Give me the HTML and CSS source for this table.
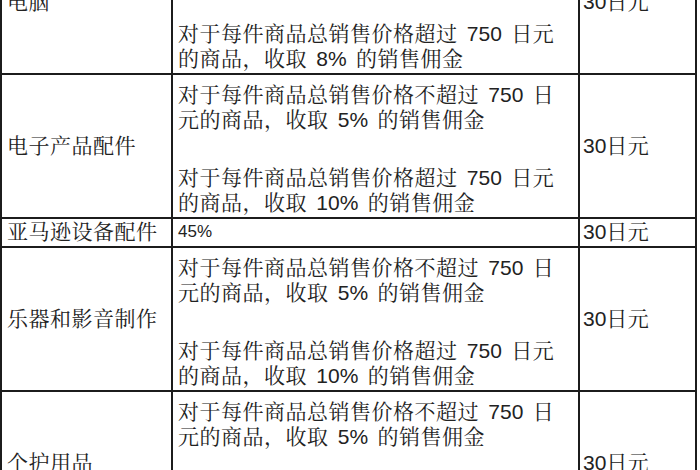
FILE: index.html
```html
<!DOCTYPE html>
<html lang="zh-CN">
<head>
<meta charset="utf-8">
<title>销售佣金</title>
<link rel="stylesheet" href="styles.css">
</head>
<body>
<div class="fee-table">
  <div class="cell cat">电脑</div>
  <div class="cell rule">
    <p class="para">对于每件商品总销售价格不超过 <span class="lat">750</span> 日<br>元的商品，收取 <span class="lat">5%</span> 的销售佣金</p>
    <p class="para">对于每件商品总销售价格超过 <span class="lat">750</span> 日元<br>的商品，收取 <span class="lat">8%</span> 的销售佣金</p>
  </div>
  <div class="cell min"><span class="lat">30</span>日元</div>

  <div class="cell cat">电子产品配件</div>
  <div class="cell rule">
    <p class="para">对于每件商品总销售价格不超过 <span class="lat">750</span> 日<br>元的商品，收取 <span class="lat">5%</span> 的销售佣金</p>
    <p class="para">对于每件商品总销售价格超过 <span class="lat">750</span> 日元<br>的商品，收取 <span class="lat">10%</span> 的销售佣金</p>
  </div>
  <div class="cell min"><span class="lat">30</span>日元</div>

  <div class="cell cat short">亚马逊设备配件</div>
  <div class="cell rule short"><span class="pct">45%</span></div>
  <div class="cell min short"><span class="lat">30</span>日元</div>

  <div class="cell cat">乐器和影音制作</div>
  <div class="cell rule">
    <p class="para">对于每件商品总销售价格不超过 <span class="lat">750</span> 日<br>元的商品，收取 <span class="lat">5%</span> 的销售佣金</p>
    <p class="para">对于每件商品总销售价格超过 <span class="lat">750</span> 日元<br>的商品，收取 <span class="lat">10%</span> 的销售佣金</p>
  </div>
  <div class="cell min"><span class="lat">30</span>日元</div>

  <div class="cell cat">个护用品</div>
  <div class="cell rule">
    <p class="para">对于每件商品总销售价格不超过 <span class="lat">750</span> 日<br>元的商品，收取 <span class="lat">5%</span> 的销售佣金</p>
    <p class="para">对于每件商品总销售价格超过 <span class="lat">750</span> 日元<br>的商品，收取 <span class="lat">10%</span> 的销售佣金</p>
  </div>
  <div class="cell min"><span class="lat">30</span>日元</div>
</div>
</body>
</html>
```
FILE: styles.css
```css
html, body {
  margin: 0;
  padding: 0;
  background: #ffffff;
}

body {
  width: 700px;
  height: 470px;
  overflow: hidden;
}

.fee-table {
  display: grid;
  grid-template-columns: 171px 407px 117px;
  width: 695px;
  margin-top: -69px;
  border-left: 2px solid #1c1c1c;
  font-family: "Liberation Sans", "Noto Serif CJK SC", "Noto Sans CJK SC", sans-serif;
  font-size: 21px;
  line-height: 24.5px;
  color: #222222;
  letter-spacing: 0.5px;
  word-spacing: 3px;
}

.cell {
  box-sizing: border-box;
  border-right: 2px solid #1c1c1c;
  border-bottom: 2px solid #1c1c1c;
  white-space: nowrap;
}

.cat {
  display: flex;
  align-items: center;
  padding-left: 5px;
}

.min {
  display: flex;
  align-items: center;
  padding-left: 3px;
}

.rule {
  display: flex;
  flex-direction: column;
  gap: 34px;
  padding: 8px 0 2px 5px;
}

.short {
  height: 29px;
  padding-top: 0;
  padding-bottom: 0;
}

.rule.short {
  display: flex;
  flex-direction: row;
  align-items: center;
}

.para {
  margin: 0;
}

.lat {
  letter-spacing: 0;
}

.pct {
  font-size: 17px;
  letter-spacing: 0;
}
```
